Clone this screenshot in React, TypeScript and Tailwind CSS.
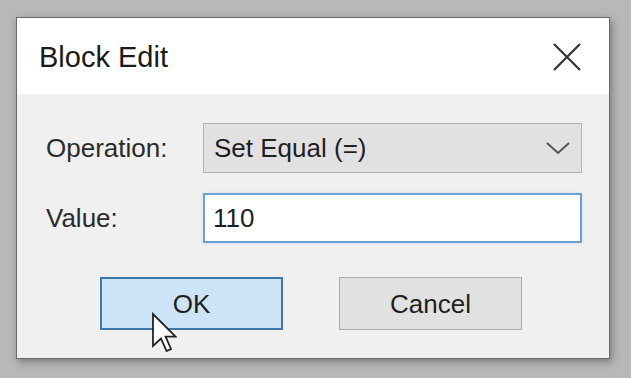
import React from "react";

export default function App() {
  const font = { fontFamily: '"Liberation Sans", Arial, sans-serif' };
  return (
    <div
      className="w-[631px] h-[378px] bg-[#b8b8b8] pt-[17px] pl-[16px] overflow-hidden"
      style={font}
    >
      <div className="relative w-[594px] h-[342px] border border-[#6a6a6a] bg-[#f0f0f0] shadow-[2px_3px_8px_rgba(0,0,0,0.35)] flex flex-col">
        {/* Title bar */}
        <div className="h-[76px] bg-white flex items-center justify-between pl-[22px] pr-[27px] pt-[2px]">
          <span className="text-[29px] leading-none text-[#1a1a1a]">Block Edit</span>
          <svg width="30" height="30" viewBox="0 0 30 30">
            <path d="M2 2 L28 28 M28 2 L2 28" stroke="#333" strokeWidth="2.2" fill="none" />
          </svg>
        </div>
        {/* Body */}
        <div className="flex-1 flex flex-col pt-[29px] pl-[29px]">
          <div className="flex items-center h-[50px]">
            <span className="w-[157px] text-[26px] text-[#2a2a2a] leading-none">Operation:</span>
            <div className="w-[379px] h-[50px] bg-[#e1e1e1] border border-[#b4b4b4] flex items-center justify-between pl-[10px] pr-[11px]">
              <span className="text-[26px] text-[#1e1e1e] leading-none">Set Equal (=)</span>
              <svg width="24" height="14" viewBox="0 0 24 14">
                <path d="M1 2 L12 12 L23 2" stroke="#555" strokeWidth="2" fill="none" />
              </svg>
            </div>
          </div>
          <div className="flex items-center h-[50px] mt-[20px]">
            <span className="w-[157px] text-[26px] text-[#2a2a2a] leading-none">Value:</span>
            <div className="w-[379px] h-[50px] bg-white border-2 border-[#6f9fd0] shadow-[0_0_3px_#bfe3ff] flex items-center pl-[8px]">
              <span className="text-[26px] text-[#1e1e1e] leading-none">110</span>
            </div>
          </div>
          <div className="flex mt-[34px] pl-[54px] gap-[56px]">
            <div className="relative w-[183px] h-[53px] bg-[#cce4f7] border-2 border-[#3f78a8] flex items-center justify-center">
              <span className="text-[26px] text-[#1e1e1e] leading-none">OK</span>
              <svg
                className="absolute left-[49px] top-[33px]"
                width="26"
                height="42"
                viewBox="0 0 13 21"
              >
                <path
                  d="M1 1 L1 17 L5 13.3 L7.8 19.5 L10 18.5 L7.3 12.3 L12.3 12.3 Z"
                  fill="white"
                  stroke="#222"
                  strokeWidth="0.9"
                  strokeLinejoin="miter"
                />
              </svg>
            </div>
            <div className="w-[183px] h-[53px] bg-[#e1e1e1] border border-[#adadad] flex items-center justify-center">
              <span className="text-[26px] text-[#1e1e1e] leading-none">Cancel</span>
            </div>
          </div>
        </div>
      </div>
    </div>
  );
}
